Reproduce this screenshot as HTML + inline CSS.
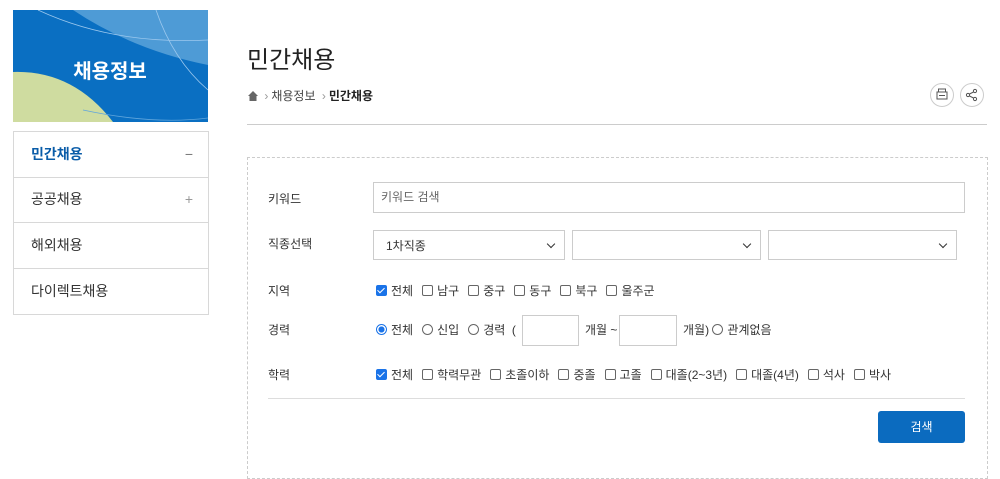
<!DOCTYPE html><html><head><meta charset="utf-8"><style>
body{margin:0;width:1000px;height:461px;overflow:hidden;background:#fff;font-family:"Liberation Sans","Noto Sans CJK KR",sans-serif;color:#333;position:relative}
.a{position:absolute}
.menu div{position:absolute;left:13px;width:194px;height:45px;border:1px solid #d8d8d8;border-top:none;font-size:14px;line-height:45px;text-indent:17px;color:#333}
.lab{position:absolute;left:268px;font-size:12px;color:#333}
.cb{display:inline-block;width:9px;height:9px;border:1px solid #666;border-radius:2px;vertical-align:-1px;margin-right:4px;background:#fff}
.cb.on{background:#1a73e8;border-color:#1a73e8;position:relative}
.cb.on:after{content:"";position:absolute;left:2px;top:0;width:3px;height:6px;border:solid #fff;border-width:0 1.5px 1.5px 0;transform:rotate(45deg)}
.rd{display:inline-block;width:9px;height:9px;border:1px solid #666;border-radius:50%;vertical-align:-1px;margin-right:4px}
.rd.on{border-color:#1a73e8;background:radial-gradient(#1a73e8 45%,#fff 50%)}
.row{position:absolute;left:376px;font-size:12px;color:#333;white-space:nowrap}
.row span.i{margin-right:9px}
.sel{position:absolute;top:230px;height:30px;border:1px solid #ccc;font-size:12px;line-height:30px;box-sizing:border-box;padding-left:12px}
.sel:after{content:"";position:absolute;right:10px;top:10px;width:5px;height:5px;border:solid #333;border-width:0 1px 1px 0;transform:rotate(45deg)}
.circ{position:absolute;top:83px;width:24px;height:24px;border:1px solid #ccc;border-radius:50%;box-sizing:border-box}
</style></head><body>
<svg class="a" style="left:13px;top:10px" width="195" height="112" viewBox="0 0 195 112">
<rect width="195" height="112" fill="#0a6fc2"/>
<path d="M60 0 Q120 40 195 55 L195 0Z" fill="#4e9bd6"/>
<path d="M0 62 Q60 60 100 112 L0 112Z" fill="#cfdca0"/>
<path d="M25 0 Q100 35 195 30" stroke="#9cc8ee" fill="none" stroke-width="0.8"/>
<path d="M143 0 Q160 50 195 80" stroke="#9cc8ee" fill="none" stroke-width="0.8"/>
<path d="M70 100 Q140 115 195 108" stroke="#5fa5dc" fill="none" stroke-width="0.8"/>
<text x="97" y="68" text-anchor="middle" fill="#fff" font-size="20" font-weight="bold" font-family="Liberation Sans,Noto Sans CJK KR,sans-serif">채용정보</text>
</svg>
<div class="menu">
<div style="top:131px;border-top:1px solid #d8d8d8;color:#0a5ca8;font-weight:bold">민간채용<span style="position:absolute;right:15px;color:#777;font-weight:normal">−</span></div>
<div style="top:177px">공공채용<span style="position:absolute;right:15px;color:#999">+</span></div>
<div style="top:223px">해외채용</div>
<div style="top:269px">다이렉트채용</div>
</div>
<div class="a" style="left:247px;top:40px;font-size:24px;color:#222">민간채용</div>
<div class="a" style="left:248px;top:87px;font-size:12px;color:#444">
<svg width="10" height="10" viewBox="0 0 10 10" style="vertical-align:-1px"><path d="M0 5 L5 0 L10 5 L8.5 5 L8.5 10 L1.5 10 L1.5 5Z" fill="#666"/></svg>
<span style="color:#999;margin:0 3px">›</span>채용정보 <span style="color:#999;margin:0 3px">›</span><b style="color:#222">민간채용</b></div>
<div class="circ" style="left:930px"><svg width="22" height="22" viewBox="0 0 22 22"><rect x="6" y="8" width="10" height="7" fill="none" stroke="#555"/><rect x="7.5" y="5" width="7" height="3" fill="none" stroke="#555"/><line x1="8" y1="11.5" x2="14" y2="11.5" stroke="#555"/></svg></div>
<div class="circ" style="left:960px"><svg width="22" height="22" viewBox="0 0 22 22" fill="none" stroke="#555"><circle cx="14" cy="7" r="1.6"/><circle cx="7" cy="11" r="1.6"/><circle cx="14" cy="15" r="1.6"/><path d="M8.5 10 L12.5 8 M8.5 12 L12.5 14"/></svg></div>
<div class="a" style="left:247px;top:124px;width:740px;height:1px;background:#ccc"></div>
<div class="a" style="left:247px;top:157px;width:739px;height:320px;border:1px dashed #ccc"></div>
<div class="lab" style="top:190px">키워드</div>
<div class="a" style="left:373px;top:182px;width:592px;height:31px;border:1px solid #ccc;box-sizing:border-box;font-size:12px;color:#666;line-height:29px;padding-left:7px">키워드 검색</div>
<div class="lab" style="top:235px">직종선택</div>
<div class="sel" style="left:373px;width:192px">1차직종</div>
<div class="sel" style="left:572px;width:189px"></div>
<div class="sel" style="left:768px;width:189px"></div>
<div class="lab" style="top:282px">지역</div>
<div class="row" style="top:282px"><span class="i"><span class="cb on"></span>전체</span><span class="i"><span class="cb"></span>남구</span><span class="i"><span class="cb"></span>중구</span><span class="i"><span class="cb"></span>동구</span><span class="i"><span class="cb"></span>북구</span><span class="i"><span class="cb"></span>울주군</span></div>
<div class="lab" style="top:321px">경력</div>
<div class="row" style="top:321px"><span class="i"><span class="rd on"></span>전체</span><span class="i"><span class="rd"></span>신입</span><span><span class="rd"></span>경력 &nbsp;(</span></div>
<div class="a" style="left:522px;top:315px;width:57px;height:31px;border:1px solid #ccc;box-sizing:border-box"></div>
<div class="row" style="left:585px;top:321px">개월 ~</div>
<div class="a" style="left:619px;top:315px;width:58px;height:31px;border:1px solid #ccc;box-sizing:border-box"></div>
<div class="row" style="left:683px;top:321px">개월) <span class="rd"></span>관계없음</div>
<div class="lab" style="top:366px">학력</div>
<div class="row" style="top:366px"><span class="i"><span class="cb on"></span>전체</span><span class="i"><span class="cb"></span>학력무관</span><span class="i"><span class="cb"></span>초졸이하</span><span class="i"><span class="cb"></span>중졸</span><span class="i"><span class="cb"></span>고졸</span><span class="i"><span class="cb"></span>대졸(2~3년)</span><span class="i"><span class="cb"></span>대졸(4년)</span><span class="i"><span class="cb"></span>석사</span><span><span class="cb"></span>박사</span></div>
<div class="a" style="left:268px;top:398px;width:697px;height:1px;background:#ddd"></div>
<div class="a" style="left:878px;top:411px;width:87px;height:32px;background:#0b6bbf;border-radius:3px;color:#fff;font-size:12px;text-align:center;line-height:32px">검색</div>
</body></html>
